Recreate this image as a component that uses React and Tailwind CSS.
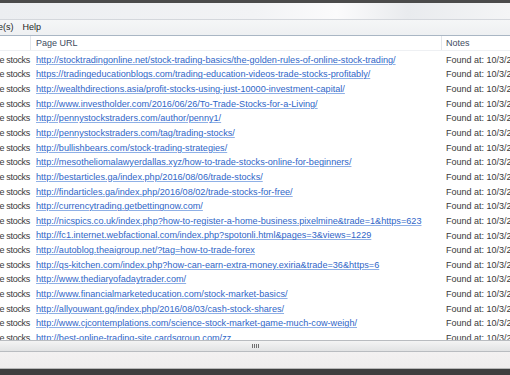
import React from "react";

// Rows shown in the results list
const urls = [
  "http://stocktradingonline.net/stock-trading-basics/the-golden-rules-of-online-stock-trading/",
  "https://tradingeducationblogs.com/trading-education-videos-trade-stocks-profitably/",
  "http://wealthdirections.asia/profit-stocks-using-just-10000-investment-capital/",
  "http://www.investholder.com/2016/06/26/To-Trade-Stocks-for-a-Living/",
  "http://pennystockstraders.com/author/penny1/",
  "http://pennystockstraders.com/tag/trading-stocks/",
  "http://bullishbears.com/stock-trading-strategies/",
  "http://mesotheliomalawyerdallas.xyz/how-to-trade-stocks-online-for-beginners/",
  "http://bestarticles.ga/index.php/2016/08/06/trade-stocks/",
  "http://findarticles.ga/index.php/2016/08/02/trade-stocks-for-free/",
  "http://currencytrading.getbettingnow.com/",
  "http://nicspics.co.uk/index.php?how-to-register-a-home-business.pixelmine&trade=1&https=623",
  "http://fc1.internet.webfactional.com/index.php?spotonli.html&pages=3&views=1229",
  "http://autoblog.theaigroup.net/?tag=how-to-trade-forex",
  "http://qs-kitchen.com/index.php?how-can-earn-extra-money.exiria&trade=36&https=6",
  "http://www.thediaryofadaytrader.com/",
  "http://www.financialmarketeducation.com/stock-market-basics/",
  "http://allyouwant.gq/index.php/2016/08/03/cash-stock-shares/",
  "http://www.cjcontemplations.com/science-stock-market-game-much-cow-weigh/",
  "http://best-online-trading-site.cardsgroup.com/zz",
];

const App = () => {
  return (
    <div
      className="w-[510px] h-[375px] flex flex-col overflow-hidden bg-white text-[9px] leading-none"
      style={{ fontFamily: '"Liberation Sans", Arial, sans-serif' }}
    >
      {/* Window frame top edge */}
      <div className="h-[3px] bg-[#4b4b4b] shrink-0" />

      {/* Title bar */}
      <div className="h-[17px] shrink-0 flex items-center bg-[linear-gradient(90deg,#eceef1_0%,#f2f3f5_50%,#fbfbfc_66%,#e9ebee_80%,#f4f5f6_100%)] border-b border-[#d4d7dc]">
        <span className="-ml-[3px] text-[#9a9a9a]">t</span>
      </div>

      {/* Menu bar */}
      <div className="h-[16px] shrink-0 flex items-center gap-[9px] bg-[linear-gradient(#f5f6f7,#eef0f2)] text-[#1e1e1e] border-b border-[#a9b6c4]">
        <span className="-ml-[2px]">e(s)</span>
        <span>Help</span>
      </div>

      {/* List view */}
      <div className="flex-1 min-h-0 flex flex-col overflow-hidden">
        {/* Column headers */}
        <div className="h-[15px] shrink-0 flex items-center text-[#3e4c5e] border-b border-[#eef0f3]">
          <div className="w-[31px] h-full border-r border-[#e3e6ea]" />
          <div className="w-[411px] h-full flex items-center pl-[5px] border-r border-[#e3e6ea]">
            Page URL
          </div>
          <div className="flex-1 h-full flex items-center pl-[4px]">Notes</div>
        </div>

        {/* Rows */}
        <div className="pt-[2px] flex flex-col">
          {urls.map((url, index) => (
            <div key={index} className="h-[14.65px] shrink-0 flex items-center whitespace-nowrap">
              <div className="w-[31px] flex justify-end overflow-hidden pr-[1px] text-[#3a3a3a] tracking-[-0.3px]">
                <span>trade stocks</span>
              </div>
              <div className="w-[411px] overflow-hidden pl-[5px]">
                <span className="text-[9.15px] text-[#2f66c8] underline decoration-[#8fb0e6]">{url}</span>
              </div>
              <div className="flex-1 overflow-hidden pl-[4px] text-[#3a3a3a]">
                Found at: 10/3/2016 2:14:05 PM
              </div>
            </div>
          ))}
        </div>
      </div>

      {/* Horizontal scroll bar */}
      <div className="h-[12px] shrink-0 border-t border-[#b9bcc0] bg-[linear-gradient(#f4f4f4,#e2e3e4)] flex items-center justify-center border-b border-[#a5a8ac]">
        <div className="flex gap-[1px]">
          <div className="w-px h-[4px] bg-[#6f6f6f]" />
          <div className="w-px h-[4px] bg-[#6f6f6f]" />
          <div className="w-px h-[4px] bg-[#6f6f6f]" />
          <div className="w-px h-[4px] bg-[#6f6f6f]" />
        </div>
      </div>

      {/* Status bar */}
      <div className="h-[17px] shrink-0 bg-[linear-gradient(#f3f1f1,#efeded)] border-b border-[#b8b8b8]" />

      {/* Window frame bottom edge */}
      <div className="h-[6px] shrink-0 bg-[#3f3f3f]" />
    </div>
  );
};

export default App;
